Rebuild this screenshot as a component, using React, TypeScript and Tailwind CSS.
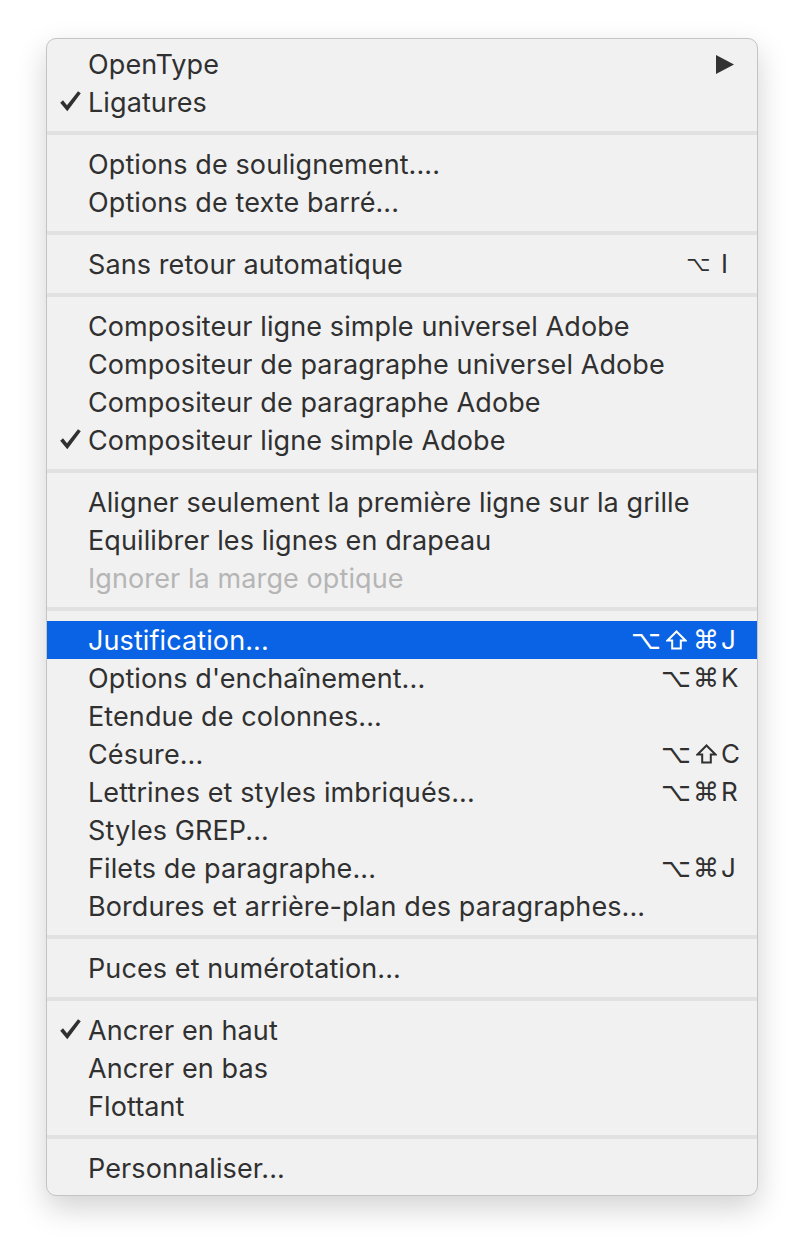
import React from 'react';

type Item = {
    label: string;
    checked?: boolean;
    disabled?: boolean;
    active?: boolean;
    submenu?: boolean;
    compact?: boolean;
    mods?: string[];
    keyChar?: string;
};

const GROUPS: Item[][] = [
    [{ label: 'OpenType', submenu: true }, { label: 'Ligatures', checked: true }],
    [{ label: 'Options de soulignement....' }, { label: 'Options de texte barré...' }],
    [{ label: 'Sans retour automatique', mods: ['⌥'], keyChar: 'I', compact: true }],
    [
        { label: 'Compositeur ligne simple universel Adobe' },
        { label: 'Compositeur de paragraphe universel Adobe' },
        { label: 'Compositeur de paragraphe Adobe' },
        { label: 'Compositeur ligne simple Adobe', checked: true },
    ],
    [
        { label: 'Aligner seulement la première ligne sur la grille' },
        { label: 'Equilibrer les lignes en drapeau' },
        { label: 'Ignorer la marge optique', disabled: true },
    ],
    [
        { label: 'Justification...', active: true, mods: ['⌥', '⇧', '⌘'], keyChar: 'J' },
        { label: "Options d'enchaînement...", mods: ['⌥', '⌘'], keyChar: 'K' },
        { label: 'Etendue de colonnes...' },
        { label: 'Césure...', mods: ['⌥', '⇧'], keyChar: 'C' },
        { label: 'Lettrines et styles imbriqués...', mods: ['⌥', '⌘'], keyChar: 'R' },
        { label: 'Styles GREP...' },
        { label: 'Filets de paragraphe...', mods: ['⌥', '⌘'], keyChar: 'J' },
        { label: 'Bordures et arrière-plan des paragraphes...' },
    ],
    [{ label: 'Puces et numérotation...' }],
    [
        { label: 'Ancrer en haut', checked: true },
        { label: 'Ancrer en bas' },
        { label: 'Flottant' },
    ],
    [{ label: 'Personnaliser...' }],
];

const Check = ({ color }: { color: string }) => (
    <svg width="24" height="24" viewBox="0 0 24 24" className="absolute left-[11px] top-[7px]">
        <path d="M2.2 12.8 L5 10.3 L9 15.2 L20 1.2 L22.8 3.3 L9.3 21.2 Z" fill={color} />
    </svg>
);

// shift key, hollow arrow
const ShiftIcon = () => (
    <svg width="21" height="20" viewBox="0 0 21 20" fill="none" stroke="currentColor" strokeWidth="2" strokeLinejoin="miter">
        <path d="M10.5 1.5 L19.5 10.5 L14.8 10.5 L14.8 18.5 L6.2 18.5 L6.2 10.5 L1.5 10.5 Z" />
    </svg>
);

const MenuRow = ({ item }: { item: Item }) => {
    const text = item.active ? 'text-white' : item.disabled ? 'text-[#b5b5b5]' : 'text-[#303030]';
    return (
        <div className={`relative flex h-[38px] items-center pl-[41px] pr-[11px] ${item.active ? 'bg-[#0a63e4]' : ''} ${text}`}>
            {item.checked && <Check color="#303030" />}
            <span className="flex-1 whitespace-nowrap text-[27px] leading-none tracking-[0.1px]">{item.label}</span>
            {item.submenu && (
                <svg width="18" height="19" viewBox="0 0 18 19" className="mr-[12px]">
                    <path d="M0 0 L18 9.5 L0 19 Z" fill="#333333" />
                </svg>
            )}
            {item.keyChar && (
                <span className="flex items-center leading-none">
                    {item.mods?.map((m, i) => (
                        <span
                            key={i}
                            className={`flex justify-center font-['DejaVu_Sans',sans-serif] ${item.compact ? 'w-[22px] text-[21px]' : 'w-[30px] text-[26px]'}`}
                        >
                            {m === '⇧' ? <ShiftIcon /> : m}
                        </span>
                    ))}
                    <span className={`${item.compact ? 'ml-[12px]' : ''} w-[25px] text-[26px]`}>{item.keyChar}</span>
                </span>
            )}
        </div>
    );
};

export default function App() {
    return (
        <div className="min-h-[1250px] w-[804px] bg-white pl-[46px] pt-[38px] font-['Inter',sans-serif]">
            <div className="w-[712px] rounded-[10px] border border-[#c4c4c4] bg-[#f1f1f1] pb-[8px] pt-[6px] shadow-[0_12px_30px_rgba(0,0,0,0.18)]">
                {GROUPS.map((group, gi) => (
                    <div key={gi}>
                        {gi > 0 && (
                            <div className="flex h-[24px] items-center">
                                <div className="h-[4px] w-full bg-[#e1e1e1]" />
                            </div>
                        )}
                        {group.map((item, ii) => (
                            <MenuRow key={ii} item={item} />
                        ))}
                    </div>
                ))}
            </div>
        </div>
    );
}
